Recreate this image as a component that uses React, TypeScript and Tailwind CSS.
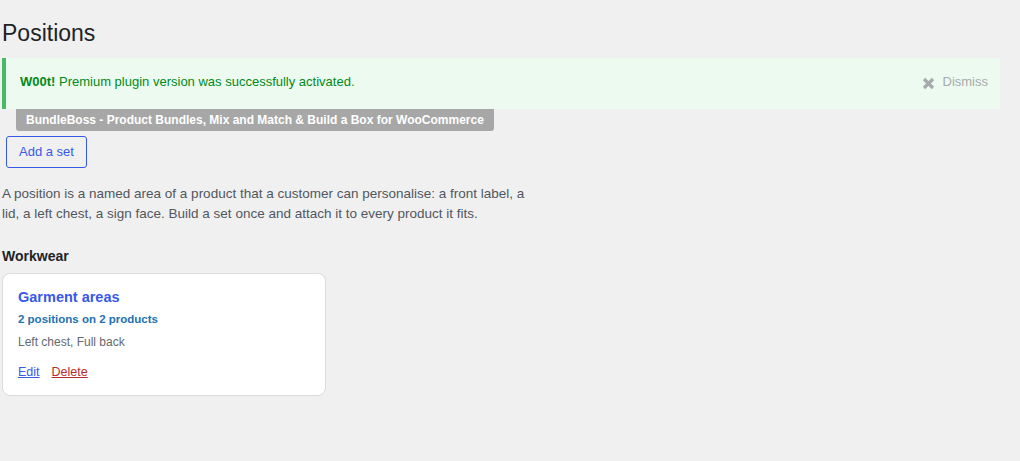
import React from "react";

export default function App() {
  return (
    <div
      className="min-h-[461px] w-[1020px] bg-[#f0f0f1] text-[#1d2327]"
      style={{ fontFamily: '"Liberation Sans", Arial, sans-serif' }}
    >
      <div className="ml-[2px] mr-[20px] pt-[18px]">
        <h1 className="text-[23px] leading-[30px] font-normal text-[#1d2327]">Positions</h1>

        <div className="mt-[10px] flex items-center justify-between border-l-4 border-[#4ab866] bg-[#edfaef] pl-[14px] pr-[12px] pt-[14px] pb-[17px]">
          <p className="text-[13px] leading-[20px] text-[#008a20]">
            <strong className="font-bold">W00t!</strong> Premium plugin version was successfully activated.
          </p>
          <button className="flex items-center gap-[8px] text-[13px] leading-[20px] text-[#a7aaad]">
            <svg width="13" height="13" viewBox="0 0 13 13" className="mt-[2px]">
              <path d="M2 2 L11 11 M11 2 L2 11" stroke="#a7aaad" strokeWidth="3.2" strokeLinecap="butt" />
            </svg>
            Dismiss
          </button>
        </div>

        <div className="ml-[14px] block h-[22px] w-fit rounded-b-[3px] bg-[#a7a7a7] px-[10px] text-[12px] font-bold leading-[22px] text-white">
          BundleBoss - Product Bundles, Mix and Match &amp; Build a Box for WooCommerce
        </div>

        <div className="mt-[5px] flex">
          <button className="ml-[4px] h-[32px] rounded-[3px] border border-[#3858e9] px-[12px] text-[13px] leading-[30px] text-[#3858e9]">
            Add a set
          </button>
        </div>

        <p className="mt-[16px] max-w-[540px] text-[13.5px] leading-[20px] text-[#50575e]">
          A position is a named area of a product that a customer can personalise: a front label, a lid, a left chest, a sign face. Build a set once and attach it to every product it fits.
        </p>

        <h2 className="mt-[22px] text-[14px] font-bold leading-[20px] text-[#1d2327]">Workwear</h2>

        <div className="mt-[7px] w-[324px] rounded-[8px] border border-[#dcdcde] bg-white pl-[15px] pr-[14px] pt-[13px] pb-[15px]">
          <div className="text-[14.5px] font-bold leading-[20px] text-[#3858e9]">Garment areas</div>
          <div className="mt-[5px] text-[11.5px] font-bold leading-[14px] text-[#2271b1]">2 positions on 2 products</div>
          <div className="mt-[8px] text-[12px] leading-[16px] text-[#646970]">Left chest, Full back</div>
          <div className="mt-[14px] flex gap-[12px] text-[12.5px] leading-[16px]">
            <a href="#" className="text-[#3858e9] underline">Edit</a>
            <a href="#" className="text-[#b32d2e] underline">Delete</a>
          </div>
        </div>
      </div>
    </div>
  );
}
